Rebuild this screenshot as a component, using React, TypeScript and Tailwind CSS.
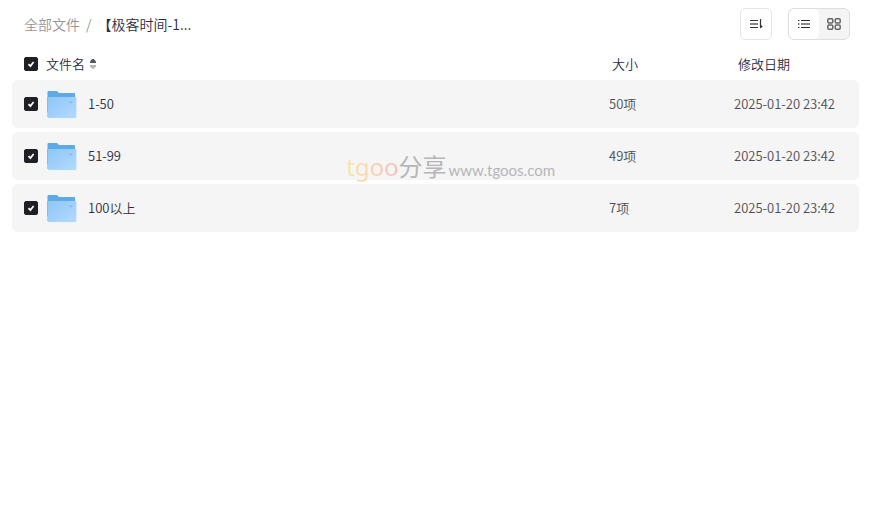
import { useState } from 'react';

interface FileItem {
  name: string;
  size: string;
  date: string;
}

const files: FileItem[] = [
  { name: '1-50', size: '50项', date: '2025-01-20 23:42' },
  { name: '51-99', size: '49项', date: '2025-01-20 23:42' },
  { name: '100以上', size: '7项', date: '2025-01-20 23:42' },
];

function Checkbox({ label, checked, onChange }: { label: string; checked: boolean; onChange: () => void }) {
  return (
    <span className="grid h-3.5 w-3.5 shrink-0 place-items-center">
      <input
        type="checkbox"
        aria-label={label}
        checked={checked}
        onChange={onChange}
        className="col-start-1 row-start-1 h-3.5 w-3.5 appearance-none rounded-xs border border-gray-400 checked:border-[#1f2026] checked:bg-[#1f2026]"
      />
      {checked && (
        <svg viewBox="0 0 14 14" className="pointer-events-none col-start-1 row-start-1 h-3.5 w-3.5" fill="none">
          <path d="M4.5 7.2 6.4 9.1 9.6 4.9" stroke="#fff" strokeWidth="1.7" />
        </svg>
      )}
    </span>
  );
}

function FolderIcon() {
  return (
    <svg viewBox="0 0 32 32" className="h-8 w-8 shrink-0">
      <defs>
        <linearGradient id="folder" x1="0" y1="0" x2="1" y2="1">
          <stop offset="0" stopColor="#8ec7f6" />
          <stop offset="0.5" stopColor="#a0d0fa" />
          <stop offset="1" stopColor="#b4dbfc" />
        </linearGradient>
      </defs>
      <path d="M1.5 4Q1.5 3 2.5 3H10.6Q11.4 3 11.9 3.8L12.8 5H28Q29 5 29 6V24H1.5Z" fill="#5eaae8" />
      <path d="M2 9V29" stroke="#5eaae8" />
      <path d="M2 9H29.4Q30.4 9 30.4 10V29Q30.4 30 29.4 30H2.8Q2 30 2 29Z" fill="url(#folder)" />
      <path d="M2 29.6H30" stroke="#a9dcf5" strokeWidth=".8" />
      <rect x="23" y="13.5" width="3.5" height="1.6" fill="#83bced" />
    </svg>
  );
}

export default function App() {
  const [selected, setSelected] = useState<string[]>(files.map(file => file.name));
  const allSelected = selected.length === files.length;

  const toggle = (name: string) => {
    setSelected(prev => (prev.includes(name) ? prev.filter(n => n !== name) : [...prev, name]));
  };

  return (
    <div className="relative min-h-screen bg-white pr-[15px] pl-3 font-['Noto_Sans_CJK_SC',sans-serif] text-[13px] font-[350] text-[#2c2c42]">
      <header className="flex h-12 items-center justify-between pr-[9px] pl-3">
        <nav className="flex items-center text-sm">
          <a href="#all" className="text-[#94949b]">全部文件</a>
          <span className="px-1.5 text-[#94949b]">/</span>
          <span>【极客时间-1...</span>
        </nav>
        <div className="flex gap-4">
          <button type="button" aria-label="排序" className="grid h-8 w-8 place-items-center rounded-md border border-[#e5e5e6]">
            <svg viewBox="0 0 16 16" className="h-4 w-4" fill="none" stroke="#333338">
              <path d="M2 4.5H10M2 11.5H10M12.5 3V12" strokeWidth="1.2" />
              <path d="M2 8H10" strokeWidth="2" stroke="#88888b" />
              <path d="M12.2 8.5 14.8 10.4 12.2 12.5Z" fill="#333338" stroke="none" />
            </svg>
          </button>
          <div className="flex h-8 overflow-hidden rounded-md border border-[#dedee0] bg-[#f4f4f5]">
            <button type="button" aria-label="列表" className="grid w-[30px] place-items-center rounded-md bg-white">
              <svg viewBox="0 0 16 16" className="h-4 w-4" fill="none" stroke="#29292d">
                <path d="M2 4.5H3.5M5 4.5H14M2 11.5H3.5M5 11.5H14" />
                <path d="M2 8H3.5M5 8H14" stroke="#88888b" strokeWidth="2" />
              </svg>
            </button>
            <button type="button" aria-label="网格" className="grid w-[30px] place-items-center">
              <svg viewBox="0 0 16 16" className="h-4 w-4" fill="none" stroke="#66666a" strokeWidth="1.5">
                <rect x="1.8" y="2.7" width="5" height="4.3" rx="1.2" />
                <rect x="9.2" y="2.7" width="5" height="4.3" rx="1.2" />
                <rect x="1.8" y="9" width="5" height="4.3" rx="1.2" />
                <rect x="9.2" y="9" width="5" height="4.3" rx="1.2" />
              </svg>
            </button>
          </div>
        </div>
      </header>

      <table className="w-full table-fixed border-separate border-spacing-x-0 border-spacing-y-1">
        <thead>
          <tr className="h-6 text-left">
            <th className="p-0 pl-3 font-[350]">
              <div className="flex items-center gap-2">
                <Checkbox
                  label="全选"
                  checked={allSelected}
                  onChange={() => setSelected(allSelected ? [] : files.map(file => file.name))}
                />
                <button type="button" className="flex items-center gap-1">
                  文件名
                  <svg viewBox="0 0 8 12" className="h-3 w-2">
                    <path d="M1 5V3.6L3.2 1H4.8L7 3.6V5Z" fill="#55555a" />
                    <path d="M1 7V8.2L3.2 10.8H4.8L7 8.2V7Z" fill="#b5b5b8" />
                  </svg>
                </button>
              </div>
            </th>
            <th className="w-[125px] p-0 pl-[3px] font-[350]">大小</th>
            <th className="w-[125px] p-0 pl-1 font-[350]">修改日期</th>
          </tr>
        </thead>
        <tbody>
          {files.map(file => (
            <tr key={file.name} className="h-12 text-[#4c4c52]">
              <td className="rounded-l-md bg-[#f5f5f5] p-0 pl-3">
                <div className="flex items-center gap-2">
                  <Checkbox label={file.name} checked={selected.includes(file.name)} onChange={() => toggle(file.name)} />
                  <FolderIcon />
                  <a href="#folder" className="pl-0.5 text-[#2c2c42]">{file.name}</a>
                </div>
              </td>
              <td className="bg-[#f5f5f5] p-0">{file.size}</td>
              <td className="rounded-r-md bg-[#f5f5f5] p-0">{file.date}</td>
            </tr>
          ))}
        </tbody>
      </table>

      {/* watermark */}
      <div className="pointer-events-none absolute top-[150px] left-[346px] flex items-baseline font-normal whitespace-nowrap text-[#b6b6b9]">
        <span className="bg-linear-to-r from-[#f8e6a4] to-[#fbbcb8] bg-clip-text font-['Noto_Sans'] text-2xl text-transparent">tgoo</span>
        <span className="text-2xl">分享</span>
        <span className="pl-0.5 font-['Lato'] text-[15px]">www.tgoos.com</span>
      </div>
    </div>
  );
}
